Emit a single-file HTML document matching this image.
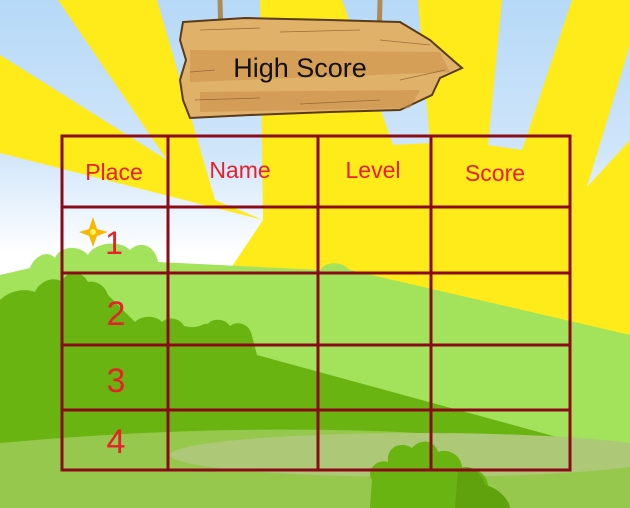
<!DOCTYPE html>
<html><head><meta charset="utf-8"><style>
html,body{margin:0;padding:0;width:630px;height:508px;overflow:hidden}
svg{display:block}
</style></head><body>
<svg width="630" height="508" viewBox="0 0 630 508" xmlns="http://www.w3.org/2000/svg">
<defs>
<linearGradient id="sky" gradientUnits="userSpaceOnUse" x1="0" y1="0" x2="0" y2="300">
<stop offset="0" stop-color="#b6d9f8"/><stop offset="0.5" stop-color="#cfe5fa"/><stop offset="0.85" stop-color="#ffffff"/><stop offset="1" stop-color="#ffffff"/>
</linearGradient>
</defs>
<rect width="630" height="508" fill="#ffea1a"/>
<g fill="url(#sky)">
<polygon points="0,0 58,0 167,160 0,55"/>
<polygon points="157,0 260,0 263,220 215,200"/>
<polygon points="0,153 263,220 233,265 233,330 0,330"/>
<polygon points="342,0 418,0 430,143 393,145"/>
<polygon points="502,0 572,0 522,150 488,145"/>
<polygon points="630,45 587,187 630,140"/>
</g>
<!-- light green hill -->
<path d="M0,275 L30,268 C35,255 48,250 55,258 C60,245 80,245 88,255 C95,242 120,240 130,250 C140,240 155,245 158,262 L320,270 C325,262 340,260 350,270 L630,335 L630,508 L0,508 Z" fill="#a3e25b"/>
<!-- dark green hill -->
<path d="M0,300 C10,290 25,288 35,292 C40,280 55,276 62,282 C66,270 82,270 88,282 C95,280 105,285 108,295 L135,322 C140,316 155,314 162,322 C168,316 180,318 184,326 C200,330 203,322 208,324 C212,318 225,318 230,326 C238,320 250,324 252,336 L257,355 L630,457 L630,508 L0,508 Z" fill="#6ab412"/>
<!-- bottom light band -->
<path d="M0,443 C120,432 260,426 400,432 C500,438 580,450 630,458 L630,508 L0,508 Z" fill="#95c84c"/>
<ellipse cx="420" cy="455" rx="250" ry="22" fill="#adc877"/>
<!-- bush bottom -->
<path d="M370,508 L372,480 C365,470 378,458 388,462 C386,448 400,440 412,448 C420,438 435,440 438,452 C448,448 462,455 462,468 C475,465 490,475 488,490 C500,492 510,500 510,508 Z" fill="#6ab412"/>
<path d="M455,508 L458,470 C468,462 482,472 485,485 C498,488 508,498 510,508 Z" fill="#5fa20e"/>
<!-- ropes -->
<g stroke="#b08a55" stroke-width="5" fill="none">
<path d="M220,0 L221,38"/><path d="M380,0 L379,38"/>
</g>
<!-- sign -->
<path d="M183,22 L245,18 L330,20 L400,22 L430,40 L455,62 L462,68 L440,78 L432,95 L400,110 L330,112 L250,115 L190,118 L183,100 L180,80 L186,60 L180,40 Z" fill="#e0b168" stroke="#5a3a18" stroke-width="2"/>
<path d="M190,50 L440,52 L450,72 L190,82 Z" fill="#c98d48" opacity="0.5"/>
<path d="M200,92 L420,90 L410,108 L200,112 Z" fill="#c98d48" opacity="0.55"/>
<g stroke="#6b4520" stroke-width="0.8" opacity="0.6">
<path d="M200,30 L260,28 M280,32 L360,30 M380,40 L430,45 M195,100 L260,98 M300,104 L380,100 M400,80 L445,70 M190,72 L215,70"/>
</g>
<text x="300" y="77" text-anchor="middle" font-family="Liberation Sans, sans-serif" font-size="27" fill="#111">High Score</text>
<!-- table -->
<g stroke="#8a0a1a" stroke-width="3" fill="none">
<rect x="62" y="136" width="508" height="334"/>
<path d="M168,136 V470 M318,136 V470 M431,136 V470 M62,207 H570 M62,273 H570 M62,345 H570 M62,410 H570"/>
</g>
<g font-family="Liberation Sans, sans-serif" fill="#e8202a" text-anchor="middle">
<text x="114" y="180" font-size="23">Place</text>
<text x="240" y="178" font-size="23">Name</text>
<text x="373" y="178" font-size="23">Level</text>
<text x="495" y="181" font-size="23">Score</text>
<text x="114" y="254" font-size="32">1</text>
<text x="116" y="325" font-size="34">2</text>
<text x="116" y="392" font-size="34">3</text>
<text x="116" y="453" font-size="34">4</text>
</g>
<path d="M93,217 L97,229 L108,232 L97,236 L93,247 L89,236 L79,232 L89,229 Z" fill="#f6b800"/>
<circle cx="93" cy="232" r="3" fill="#fff35a"/>
</svg>
</body></html>
